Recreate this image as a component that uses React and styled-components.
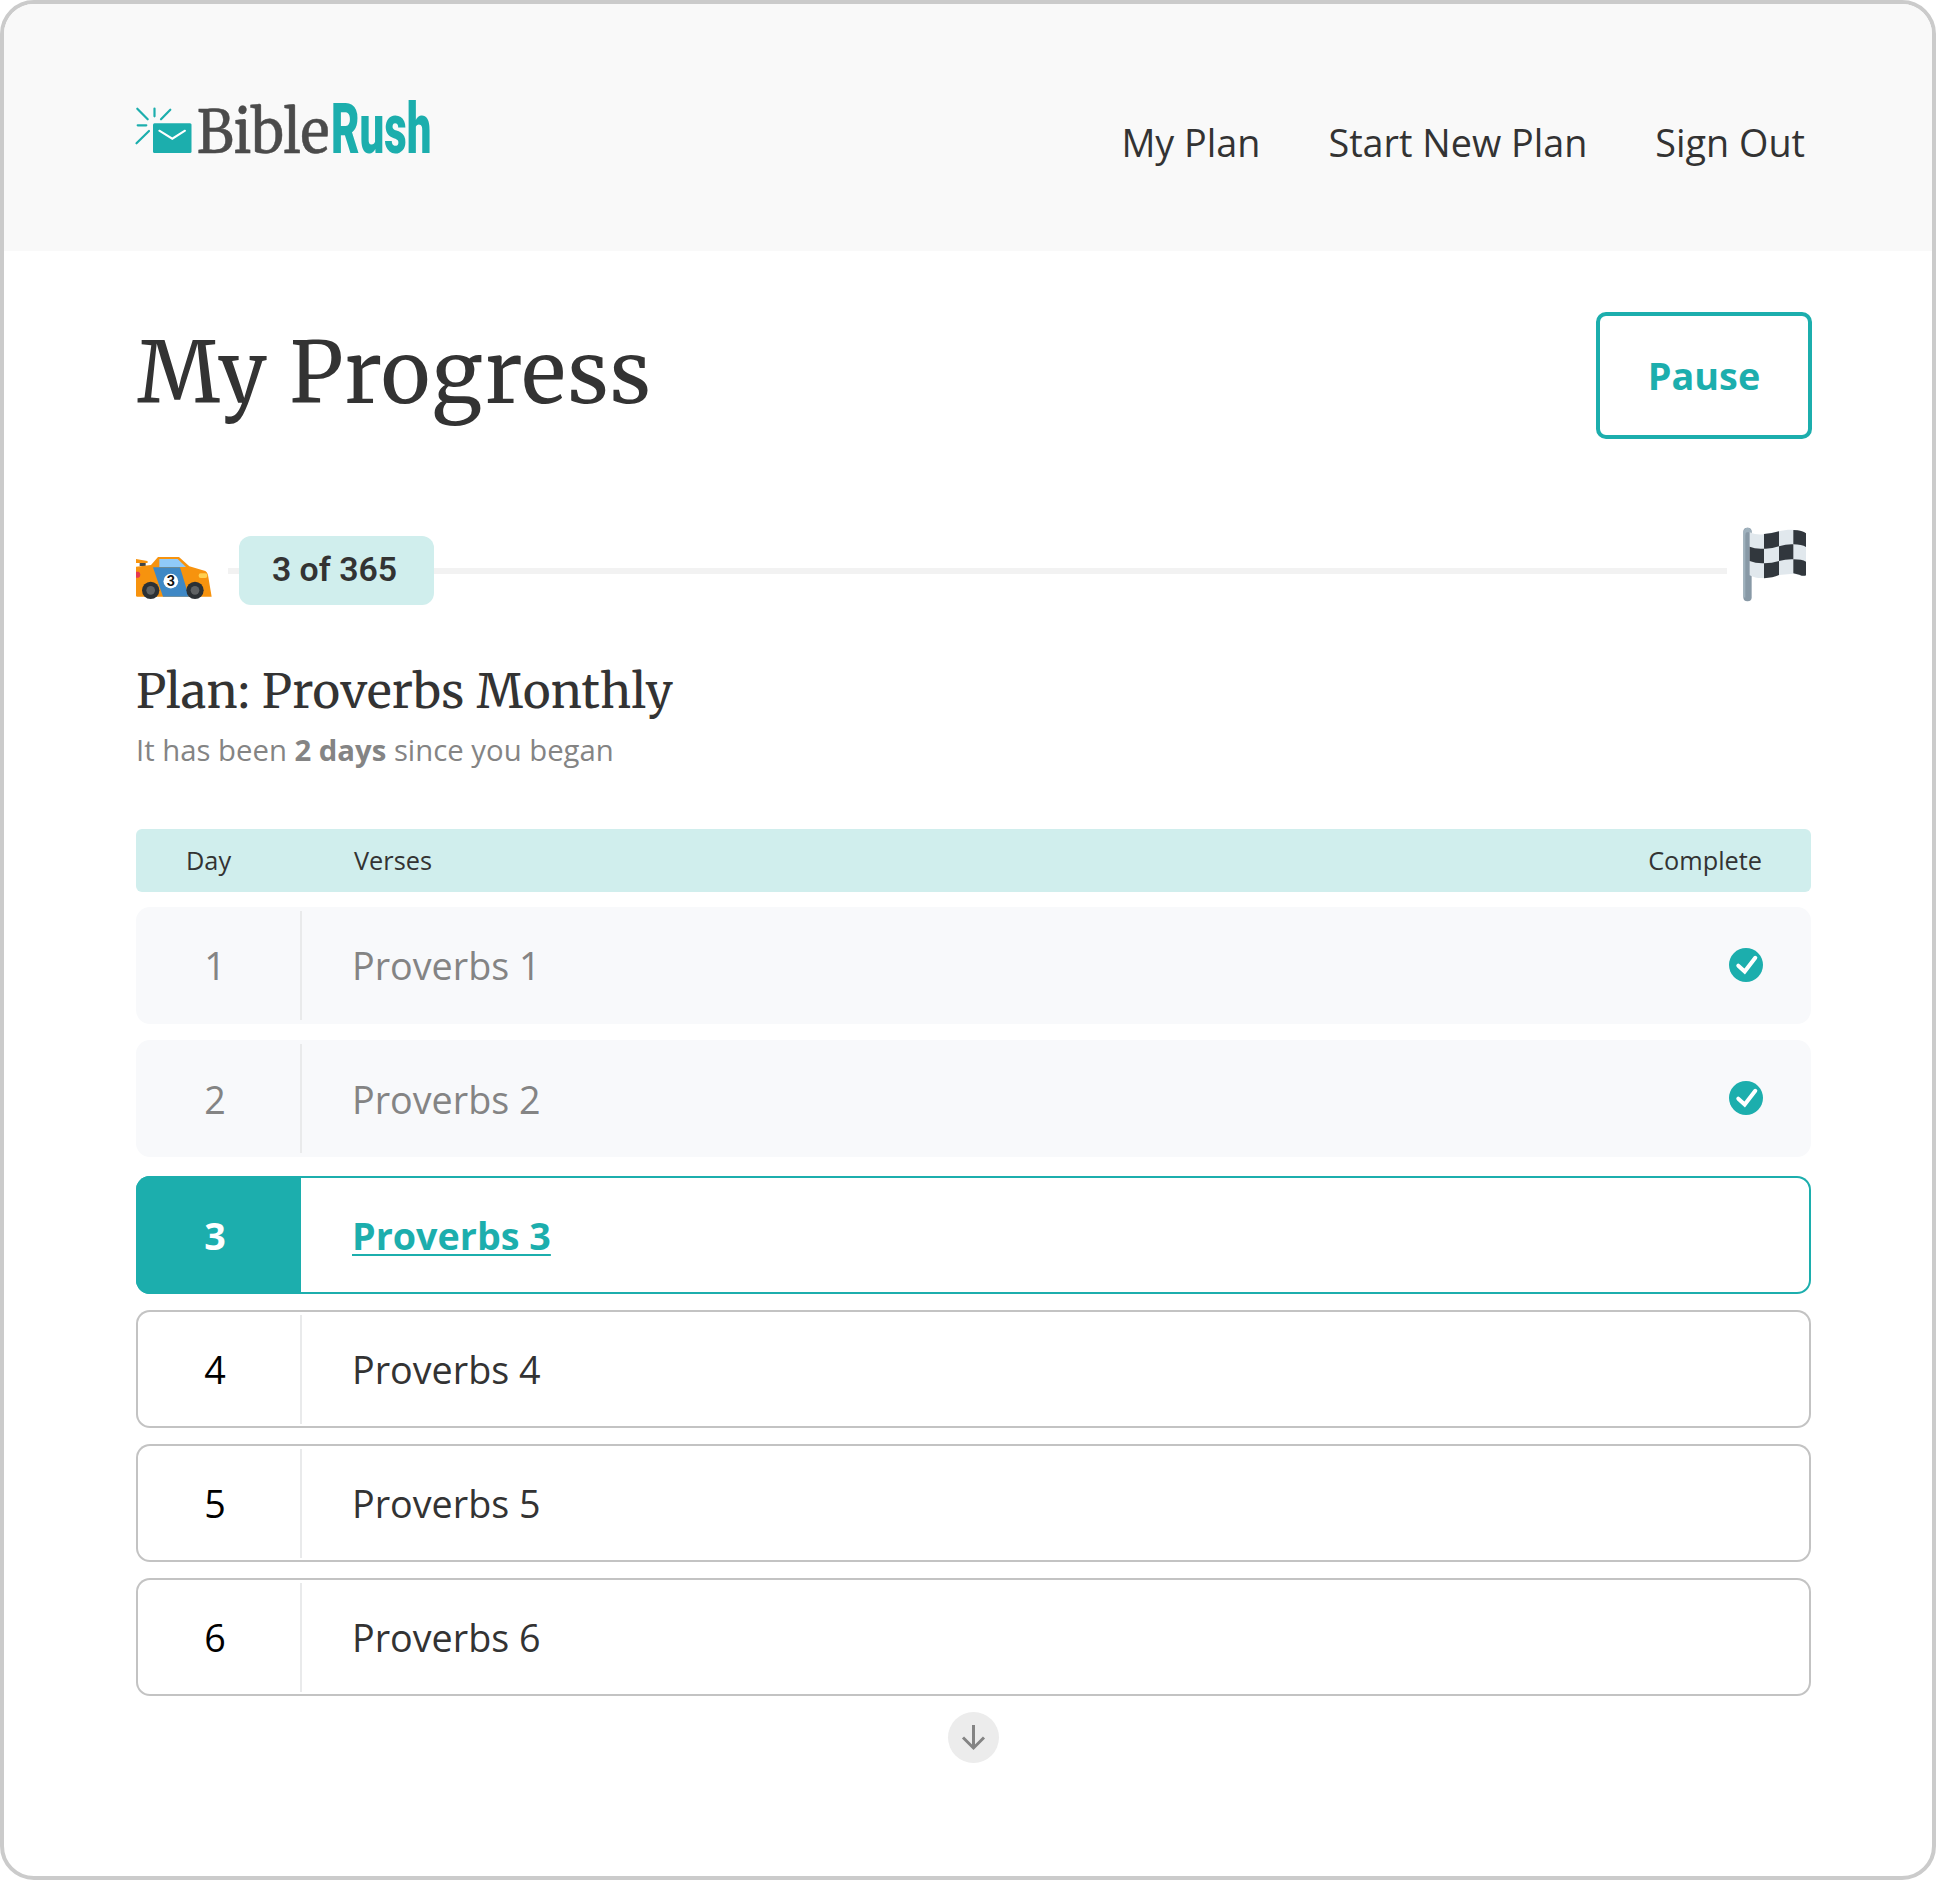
import React from "react";
import styled, { createGlobalStyle, css } from "styled-components";

const teal = "#1caead";
const mint = "#d0eeed";
const ink = "#333333";
const muted = "#848484";
const sans = `"Open Sans", "Noto Sans", sans-serif`;
const serif = `"Merriweather", "DejaVu Serif Condensed", "DejaVu Serif", serif`;

const GlobalStyle = createGlobalStyle`
  *, *::before, *::after { box-sizing: border-box; }
  body { margin: 0; background: #fff; font-family: ${sans}; color: ${ink}; }
`;

const Frame = styled.div`
  width: 1936px;
  height: 1880px;
  border: 4px solid #cbcbcb;
  border-radius: 34px;
  overflow: hidden;
  background: #fff;
`;

const Header = styled.header`
  height: 247px;
  padding: 0 127px 0 131px;
  display: flex;
  justify-content: space-between;
  align-items: flex-start;
  background: #f9f9f9;
`;

const Logo = styled.svg`
  display: block;
  width: 300px;
  height: 116px;
  margin-top: 56px;
  overflow: visible;
`;

const Nav = styled.nav`
  display: flex;
  gap: 68px;
  margin-top: 113px;
`;

const NavLink = styled.a`
  font-size: 37.75px;
  line-height: 52px;
  white-space: nowrap;
`;

const Main = styled.main`
  padding: 61px 121px 0 132px;
  display: flex;
  flex-direction: column;
`;

const TitleRow = styled.div`
  display: flex;
  justify-content: space-between;
  height: 127px;
  margin-right: -1px;
`;

const Title = styled.h1`
  margin: 0 0 0 1px;
  font: 400 84px/122px ${serif};
  letter-spacing: 1.25px;
`;

const PauseButton = styled.button`
  width: 216px;
  height: 127px;
  border: 4px solid ${teal};
  border-radius: 10px;
  background: #fff;
  color: ${teal};
  font: 700 37.75px/52px ${sans};
  padding: 0;
`;

const Progress = styled.div`
  display: flex;
  align-items: center;
  height: 79px;
  margin-top: 88px;
`;

const Car = styled.svg`
  flex: none;
  width: 76px;
  height: 43.33px;
  margin: 22px 16px 0 0;
`;

const Track = styled.div`
  flex: 1;
  display: flex;
  align-items: center;
  height: 69px;
  margin-top: 8px;
  padding-left: 11px;
  background: linear-gradient(#f2f2f2, #f2f2f2) 0 32px / 100% 6px no-repeat;
`;

const Pill = styled.div`
  width: 195px;
  height: 69px;
  padding-right: 4px;
  border-radius: 12px;
  background: ${mint};
  text-align: center;
  font: 600 33.8px/67px Roboto, sans-serif;
`;

const Flag = styled.svg`
  flex: none;
  width: 64px;
  height: 75px;
  margin: 0 4px 4px 16px;
`;

const PlanTitle = styled.h2`
  margin: 54px 0 0;
  font: 400 47px/64px ${serif};
  letter-spacing: 0.42px;
`;

const PlanNote = styled.p`
  margin: 6px 0 0;
  font-size: 29.3px;
  line-height: 40px;
  color: ${muted};
`;

const TableHead = styled.div`
  display: flex;
  height: 63px;
  margin: 59px 0 15px;
  padding: 0 49px 0 50px;
  border-radius: 6px;
  background: ${mint};
  font-size: 25.3px;
  line-height: 63px;
`;

const HeadCell = styled.div`
  width: ${(p) => p.$width};
  flex: ${(p) => (p.$width ? "none" : 1)};
`;

const Group = styled.div`
  display: flex;
  flex-direction: column;
  gap: 16px;
  margin-bottom: 19px;
`;

const DayNumber = styled.div`
  width: 164px;
  padding-right: 6px;
  text-align: center;
`;

const Verse = styled.div`
  flex: 1;
  padding-left: 50px;
`;

const Divider = styled.div`
  width: 2px;
  height: 109px;
  background: #e9eaeb;
`;

const rowStates = {
  done: css`
    height: 117px;
    background: #f8f9fb;
    color: ${muted};
    & + & > ${DayNumber}, & + & > ${Verse} {
      padding-top: 2px;
    }
  `,
  current: css`
    height: 118px;
    color: ${teal};
    font-weight: 700;
    box-shadow: inset 0 0 0 2px ${teal};
    ${DayNumber} {
      align-self: stretch;
      width: 165px;
      padding-right: 7px;
      line-height: 120px;
      background: ${teal};
      color: #fff;
    }
    ${Verse} {
      padding: 2px 0 0 51px;
    }
  `,
  upcoming: css`
    height: 118px;
    box-shadow: inset 0 0 0 2px #c3c3c3;
    ${DayNumber} {
      padding-top: 2px;
      color: #000;
    }
    ${Verse} {
      padding-top: 2px;
    }
  `,
};

const Row = styled.div`
  display: flex;
  align-items: center;
  border-radius: 14px;
  overflow: hidden;
  font-size: 37.7px;
  line-height: 52px;
  ${(p) => rowStates[p.$state]}
`;

const VerseLink = styled.a`
  text-decoration: underline;
  text-decoration-thickness: 2px;
  text-underline-offset: 4px;
`;

const Check = styled.svg`
  width: 34px;
  height: 34px;
  margin: 0 48px 1px 0;
`;

const MoreButton = styled.button`
  align-self: center;
  width: 51px;
  height: 51px;
  margin-top: -3px;
  padding: 0;
  border: 0;
  border-radius: 50%;
  background: #ececec;
  svg { display: block; }
`;

const days = [
  { day: 1, state: "done" },
  { day: 2, state: "done" },
  { day: 3, state: "current" },
  { day: 4, state: "upcoming" },
  { day: 5, state: "upcoming" },
  { day: 6, state: "upcoming" },
];

function LogoMark() {
  return (
    <Logo viewBox="135 60 300 116" aria-label="BibleRush">
      <g stroke={teal} strokeWidth="2.200" strokeLinecap="round" fill="none">
        <path d="M137.3 108.7 147.7 119.3M154.5 108.5V116.3M170.3 109.7 161 119.3M137.7 125.3H146.3M136.5 143.3 149 131" />
      </g>
      <rect x="153" y="123.2" width="38.5" height="29.8" rx="1.5" fill={teal} />
      <path d="M159.3 130.7 172.3 138.7 185 130.7" fill="none" stroke="#fff" strokeWidth="2" strokeLinecap="round" />
      <text x="196.500" y="152.6" fontFamily={serif} fontSize="59" fill="#4b4b4b" stroke="#4b4b4b" strokeWidth="0.500" textLength="133" lengthAdjust="spacingAndGlyphs">Bible</text>
      <text x="331" y="152.6" fontFamily="Roboto, sans-serif" fontWeight="900" fontSize="70" fill={teal} textLength="100.500" lengthAdjust="spacingAndGlyphs">Rush</text>
    </Logo>
  );
}

function RaceCar() {
  return (
    <Car viewBox="48 108 228 130">
      <path d="M59 129H77V138H59Z" fill="#414547" />
      <path d="M48 117 82 123Q85 126 82 129H48Z" fill="#f7930e" />
      <path d="M48 140 93 135 114 111H177L208 139 256 153Q262 156 264 165L275 230H50L48 227Z" fill="#f7930e" />
      <path d="M118 117H173L198 141H118Z" fill="#90caf9" />
      <path d="M99 142H180L207 230H129Z" fill="#3f88c5" />
      <path d="M48 155H56Q61 158 61 164T56 173H48Z" fill="#e53950" />
      <rect x="236" y="160" width="26" height="14" rx="6" fill="#ffd04f" />
      <circle cx="152.500" cy="183.500" r="22" fill="#fff" />
      <text x="152.500" y="198.500" textAnchor="middle" fontFamily="Roboto, sans-serif" fontWeight="700" fontSize="43" fill="#111">3</text>
      {[92, 225].map((x) => (
        <g key={x}>
          <circle cx={x} cy="211" r="26" fill="#2c3135" />
          <circle cx={x} cy="211" r="13" fill="#5f6264" />
        </g>
      ))}
    </Car>
  );
}

function CheckeredFlag() {
  return (
    <Flag viewBox="159 50 192 225">
      <rect x="160" y="52" width="25" height="221" rx="12" fill="#8899a6" />
      <path d="M160 64Q163 52 173 52T185 66H170Q166 67 166 76V262Q160 262 160 258Z" fill="#9fb1bd" />
      <path d="M179 65C194 73 213 74 222 71L267 63C292 56 330 56 348 69V195C341 204 324 190 310 190L267 194 222 203C208 204 193 203 179 195Z" fill="#e1e8ed" />
      <g fill="#31373d">
        <path d="M222 71Q246 69 267 63V108Q245 116 222 115Z" />
        <path d="M310 59Q338 60 348 69V110Q335 102 310 102Z" />
        <path d="M179 109Q197 117 222 115V159Q198 160 179 152Z" />
        <path d="M267 108Q290 101 310 102V147Q289 146 267 152Z" />
        <path d="M222 159Q246 159 267 152V194Q249 202 222 204Z" />
        <path d="M310 147Q336 147 348 154V195Q341 199 328 193L310 189Z" />
      </g>
    </Flag>
  );
}

function DayRow({ day, state }) {
  const label = `Proverbs ${day}`;
  return (
    <Row $state={state}>
      <DayNumber>{day}</DayNumber>
      {state !== "current" && <Divider />}
      <Verse>{state === "current" ? <VerseLink>{label}</VerseLink> : label}</Verse>
      {state === "done" && (
        <Check viewBox="0 0 34 34">
          <circle cx="17" cy="17" r="17" fill={teal} />
          <path d="M9.300 17.700 15.700 23.500 26.300 9.800" fill="none" stroke="#fff" strokeWidth="4" strokeLinecap="round" />
        </Check>
      )}
    </Row>
  );
}

export default function App() {
  return (
    <>
      <GlobalStyle />
      <Frame>
        <Header>
          <LogoMark />
          <Nav>
            <NavLink>My Plan</NavLink>
            <NavLink>Start New Plan</NavLink>
            <NavLink>Sign Out</NavLink>
          </Nav>
        </Header>
        <Main>
          <TitleRow>
            <Title>My Progress</Title>
            <PauseButton>Pause</PauseButton>
          </TitleRow>
          <Progress>
            <RaceCar />
            <Track>
              <Pill>3 of 365</Pill>
            </Track>
            <CheckeredFlag />
          </Progress>
          <PlanTitle>Plan: Proverbs Monthly</PlanTitle>
          <PlanNote>
            It has been <b>2 days</b> since you began
          </PlanNote>
          <TableHead>
            <HeadCell $width="168px">Day</HeadCell>
            <HeadCell>Verses</HeadCell>
            <HeadCell $width="auto">Complete</HeadCell>
          </TableHead>
          <Group>
            {days.slice(0, 2).map((d) => <DayRow key={d.day} {...d} />)}
          </Group>
          <Group>
            {days.slice(2).map((d) => <DayRow key={d.day} {...d} />)}
          </Group>
          <MoreButton aria-label="Show more days">
            <svg width="51" height="51" viewBox="0 0 51 51" fill="none" stroke="#848484" strokeWidth="3">
              <path d="M25.500 13V36.500M15 25.500 25.500 36 36 25.500" />
            </svg>
          </MoreButton>
        </Main>
      </Frame>
    </>
  );
}
